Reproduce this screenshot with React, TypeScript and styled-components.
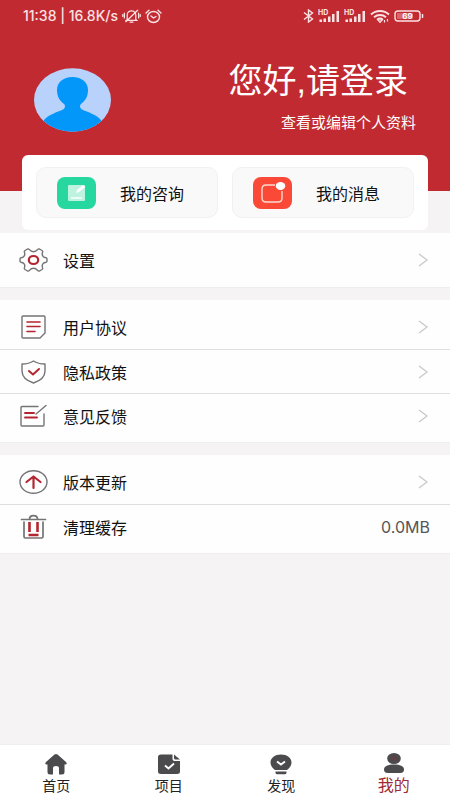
import React from "react";
import styled, { createGlobalStyle } from "styled-components";

const GlobalStyle = createGlobalStyle`
  * { box-sizing: border-box; }
  body {
    margin: 0;
    background: #f5f3f4;
    color: #111;
    font-family: "Liberation Sans", "Noto Sans CJK SC", sans-serif;
  }
  a { color: inherit; text-decoration: none; }
  button { font: inherit; color: inherit; border: 0; padding: 0; cursor: pointer; }
  svg { display: block; flex: none; }
`;

const Screen = styled.div`
  display: flex;
  flex-direction: column;
  min-height: 100vh;
`;

const Hero = styled.header`
  background: #c22a32;
  color: #fff;
  padding-bottom: 58px;
`;

const StatusBar = styled.div`
  display: flex;
  align-items: center;
  justify-content: space-between;
  height: 32px;
  padding: 0 26px 0 23px;
  color: #fbe3e3;
`;

const StatusGroup = styled.div`
  display: flex;
  align-items: center;
  gap: 4px;
  font: 500 14px/16px Inter, sans-serif;
`;

const Profile = styled.div`
  display: flex;
  align-items: flex-end;
  justify-content: space-between;
  padding: 29px 34px 0;
`;

const Greeting = styled.div`
  display: flex;
  flex-direction: column;
  align-items: flex-end;
  gap: 12px;
`;

const LoginLink = styled.a`
  font-size: 34px;
  line-height: 40px;
  padding-right: 8px;
`;

const EditLink = styled.a`
  font-size: 15px;
  line-height: 20px;
`;

const ShortcutCard = styled.section`
  display: grid;
  grid-template-columns: 1fr 1fr;
  gap: 14px;
  margin: -36px 22px 3px;
  padding: 12px 14px;
  background: #fff;
  border-radius: 6px;
`;

const Shortcut = styled.button`
  display: flex;
  align-items: center;
  gap: 24px;
  height: 51px;
  padding-left: 20px;
  background: #f9f9f9;
  border: 1px solid #f1f1f1;
  border-radius: 10px;
  font-size: 16px;
`;

const Groups = styled.main`
  display: flex;
  flex-direction: column;
  flex: 1;
  gap: 12px;
  padding-bottom: 12px;
`;

const Group = styled.nav`
  background: #fefefe;
  padding: 5px 0;
  border-bottom: 1px solid #efedee;
`;

const Row = styled.a`
  display: flex;
  align-items: center;
  height: 44px;
  padding: 0 20px 0 19px;
  font-size: 16px;

  & + & {
    border-top: 1px solid #dedede;
  }
`;

const RowLabel = styled.span`
  flex: 1;
  margin-left: 15px;
`;

const RowValue = styled.span`
  color: #555;
  font: 400 16px/20px Inter, sans-serif;
`;

const TabBar = styled.nav`
  display: grid;
  grid-template-columns: repeat(4, 1fr);
  height: 56px;
  background: #fff;
  border-top: 1px solid #f0eeee;
`;

const Tab = styled.a<{ $active?: boolean }>`
  display: flex;
  flex-direction: column;
  align-items: center;
  justify-content: flex-end;
  gap: 1px;
  padding-bottom: 4px;
  font-size: ${(p) => (p.$active ? 16 : 14)}px;
  line-height: 20px;
  color: ${(p) => (p.$active ? "#a02a35" : "#222")};
`;

const AvatarLink = styled.a`
  margin-bottom: 1px;
`;

const GREY = "#747476";
const RED = "#b3262f";
const DARK = "#4b4b4d";

const MutedBell = () => (
  <svg width="19" height="16" viewBox="0 0 20 16" fill="none" stroke="currentColor" strokeWidth="1.3" strokeLinecap="round">
    <path d="M5.500 11.500V7a4.500 4.500 0 0 1 9 0v4.500l1 1H4.500zM8.500 14.500h3M4 14 16.500 2M2.500 5v5M.8 6.500v2M17.500 5v5M19.200 6.500v2" />
  </svg>
);

const AlarmClock = () => (
  <svg width="17" height="15" viewBox="0 0 17 15" fill="none" stroke="currentColor" strokeWidth="1.4" strokeLinecap="round">
    <ellipse cx="8.500" cy="8" rx="6" ry="5.500" />
    <path d="M1 4 4 1.200M16 4l-3-2.800M6 7l2.500 2L11 7.500" />
  </svg>
);

const Bluetooth = () => (
  <svg width="11" height="14" viewBox="0 0 11 14" fill="none" stroke="currentColor" strokeWidth="1.4">
    <path d="m1 3.500 8.500 6.500-4 3V1l4 3L1 10.500" />
  </svg>
);

const HdSignal = () => (
  <svg width="22" height="14" viewBox="0 0 22 14" fill="currentColor">
    <text x="0" y="6" fontSize="7" fontWeight="700" fontFamily="Inter, sans-serif">HD</text>
    <path d="M1.500 10.500H4V13H1.500zM5.500 9.500H8V13H5.500zM10 7.500h2.500V13H10zM14 5h2.500v8H14zM18.500 2H21v11h-2.500z" />
  </svg>
);

const Wifi = () => (
  <svg width="20" height="14" viewBox="0 0 20 14" fill="none" stroke="currentColor" strokeWidth="1.900">
    <path d="M1 5.500c5-4.700 13-4.700 18 0M4 8.300c3.500-3 8.500-3 12 0M7 10.700c2-1.500 4-1.500 6 0" />
    <path d="m8 11 2 2.500 2-2.500zM14.500 11v2.500M17.500 10v2.500" strokeWidth="1.200" />
  </svg>
);

const Battery = () => (
  <svg width="30" height="12" viewBox="0 0 30 12" fill="none" stroke="currentColor">
    <rect x="1" y="1" width="25" height="10" rx="3" strokeWidth="1.400" />
    <rect x="3" y="3" width="16" height="6" rx="1" fill="#d9646a" stroke="none" />
    <path d="M28.500 4v4" strokeWidth="1.500" />
    <text x="13.500" y="9" textAnchor="middle" fontSize="8" fontWeight="700" fontFamily="Inter, sans-serif" fill="#fff" stroke="none">69</text>
  </svg>
);

const Avatar = () => (
  <svg width="77" height="64" viewBox="0 0 77 64" role="img" aria-label="头像">
    <defs>
      <clipPath id="avatar-shape"><ellipse cx="38.500" cy="32" rx="38.500" ry="31.700" /></clipPath>
    </defs>
    <g clipPath="url(#avatar-shape)">
      <path fill="#b8d2fb" d="M0 0h77v64H0z" />
      <path fill="#0497fa" d="M38.500 9C29 9 23 14.500 23 22c0 7 3 11 7 14 2 2 1 5-3 6.500-8 3-13 5-17 9.500V64h57V52c-4-4.500-9-6.500-17-9.500-4-1.500-5-4.500-3-6.500 4-3 7-7 7-14 0-7.500-6-13-15.500-13" />
    </g>
  </svg>
);

const ConsultIcon = () => (
  <svg width="39" height="32" viewBox="0 0 39 32">
    <rect width="39" height="32" rx="8" fill="#26d7a0" />
    <rect x="11" y="8" width="17" height="16" rx="1" fill="#bdf3df" />
    <path d="m19 16 1-3 6-5 2.500 2-6.500 5z" fill="#fff" />
    <path d="M14 21h11" stroke="#fff" strokeWidth="1.500" />
  </svg>
);

const MessageIcon = () => (
  <svg width="39" height="32" viewBox="0 0 39 32">
    <rect width="39" height="32" rx="8" fill="#fb4938" />
    <path d="M22 8h-9q-4 0-4 4v9q0 4 4 4h12q4 0 4-4v-7" fill="none" stroke="#ffd9cf" strokeWidth="1.400" />
    <ellipse cx="27.500" cy="9" rx="4.800" ry="4" fill="#fff" />
  </svg>
);

const RowIcon = ({ children }: { children: React.ReactNode }) => (
  <svg width="29" height="26" viewBox="0 0 29 26" fill="none" stroke={GREY} strokeWidth="1.4" strokeLinejoin="round" strokeLinecap="round">
    {children}
  </svg>
);

const SettingsIcon = () => (
  <RowIcon>
    <path d="M8.500 2Q9.500 1.500 10.500 2.700Q12 4.700 14.500 4.700Q17 4.700 18.500 2.700Q19.500 1.500 20.500 2L23 3.500Q24 4.200 23.500 5.500Q22.700 8 24.200 9.500Q25 10.500 27 10.800Q28 11 28 12V14Q28 15 27 15.200Q25 15.500 24.200 16.500Q22.700 18 23.500 20.500Q24 21.800 23 22.500L20.500 24Q19.500 24.500 18.500 23.300Q17 21.300 14.500 21.300Q12 21.300 10.500 23.300Q9.500 24.500 8.500 24L6 22.500Q5 21.800 5.500 20.500Q6.300 18 4.800 16.500Q4 15.500 2 15.200Q1 15 1 14V12Q1 11 2 10.800Q4 10.500 4.800 9.500Q6.300 8 5.500 5.500Q5 4.200 6 3.500Z" />
    <ellipse cx="14.500" cy="13" rx="4.700" ry="4" stroke={RED} strokeWidth="2.200" />
  </RowIcon>
);

const AgreementIcon = () => (
  <RowIcon>
    <path d="M4 2h21q1 0 1 1v16l-5 5H4q-1 0-1-1V3q0-1 1-1z" />
    <path d="M8 8h13M8 12.500h13M8 17.500h8" stroke={RED} strokeWidth="1.600" />
  </RowIcon>
);

const ShieldIcon = () => (
  <RowIcon>
    <path d="M14.500 2Q19 5 26 5v7c0 6-4 9.500-11.500 12C7 21.500 3 18 3 12V5q7 0 11.500-3z" />
    <path d="m10 12 4 3.500L20 10" stroke={RED} strokeWidth="2" />
  </RowIcon>
);

const FeedbackIcon = () => (
  <RowIcon>
    <path d="M19 3.500H3q-1 0-1 1V22q0 1 1 1h21q1 0 1-1V11M17 11l10-8.500" />
    <path d="M6 10h9M6 14.500h12" stroke={RED} strokeWidth="1.900" />
  </RowIcon>
);

const UpdateIcon = () => (
  <RowIcon>
    <ellipse cx="14.500" cy="13" rx="13.500" ry="11.300" />
    <path d="M14.500 19V7.500M7.500 13l7-5.500 7 5.500" stroke={RED} strokeWidth="2.200" />
  </RowIcon>
);

const TrashIcon = () => (
  <RowIcon>
    <path d="M2.500 5.500h24M10.500 5C10.500.5 18.500.5 18.500 5M5 8v14.500q0 1.500 1.500 1.500h16q1.500 0 1.500-1.500V8" strokeWidth="1.700" />
    <path d="M10.500 8v10M18.500 8v10M9.500 21h10" stroke={RED} strokeWidth="2.600" strokeLinecap="butt" />
  </RowIcon>
);

const Chevron = () => (
  <svg width="14" height="14" viewBox="0 0 14 14" fill="none" stroke="#c9c9c9" strokeWidth="1.300">
    <path d="m3 1 8 6-8 6" />
  </svg>
);

const HomeIcon = () => (
  <svg width="24" height="22" viewBox="0 0 24 22" fill={DARK}>
    <path d="M10.500 1.500q1.500-1 3 0L22 9q2 2.500-1 2.500h-.5V19q0 2.500-2.500 2.500h-3V15q0-2-3-2t-3 2v6.500H6Q3.500 21.500 3.500 19v-7.500H3Q0 11.500 2 9z" />
  </svg>
);

const ProjectIcon = () => (
  <svg width="24" height="22" viewBox="0 0 24 22">
    <path fill={DARK} d="M4 1.500h11.500V6q0 2 2 2H23v10.500q0 2.500-3 2.500H4q-3 0-3-2.500V4Q1 1.500 4 1.500zM17 1.500 23 6.500h-4.500Q17 6.500 17 5z" />
    <path d="m8 12.500 3.500 3 5.500-5" fill="none" stroke="#fff" strokeWidth="1.900" />
  </svg>
);

const DiscoverIcon = () => (
  <svg width="24" height="22" viewBox="0 0 24 22">
    <path fill={DARK} d="M12 1.500c6 0 10.500 3.500 10.500 8 0 3-2 5.500-4.500 7.500H6c-2.500-2-4.500-4.500-4.500-7.500 0-4.500 4.500-8 10.500-8zM6.500 18.500h11v1.200q0 1.500-2 1.500h-7q-2 0-2-1.500z" />
    <path d="m8 8.500 4 3 4-3" fill="none" stroke="#fff" strokeWidth="1.900" />
  </svg>
);

const MineIcon = () => (
  <svg width="24" height="22" viewBox="0 0 24 22" fill={DARK}>
    <ellipse cx="12" cy="5.500" rx="6.800" ry="5.500" />
    <ellipse cx="12" cy="5.500" rx="3.500" ry="2.500" fill="#5d4145" />
    <path d="M2 16.500C2 13 6 11.500 12 11.500s10 1.500 10 5q0 3.500-4 3.500H6q-4 0-4-3.500z" />
  </svg>
);

type Item = { label: string; Icon: React.ComponentType; value?: string };

const groups: Item[][] = [
  [{ label: "设置", Icon: SettingsIcon }],
  [
    { label: "用户协议", Icon: AgreementIcon },
    { label: "隐私政策", Icon: ShieldIcon },
    { label: "意见反馈", Icon: FeedbackIcon },
  ],
  [
    { label: "版本更新", Icon: UpdateIcon },
    { label: "清理缓存", Icon: TrashIcon, value: "0.0MB" },
  ],
];

const tabs = [
  { label: "首页", Icon: HomeIcon },
  { label: "项目", Icon: ProjectIcon },
  { label: "发现", Icon: DiscoverIcon },
  { label: "我的", Icon: MineIcon, active: true },
];

export default function App() {
  return (
    <Screen>
      <GlobalStyle />
      <Hero>
        <StatusBar>
          <StatusGroup>
            <span>11:38 | 16.8K/s</span>
            <MutedBell />
            <AlarmClock />
          </StatusGroup>
          <StatusGroup>
            <Bluetooth />
            <HdSignal />
            <HdSignal />
            <Wifi />
            <Battery />
          </StatusGroup>
        </StatusBar>
        <Profile>
          <AvatarLink href="#profile"><Avatar /></AvatarLink>
          <Greeting>
            <LoginLink href="#login">您好,请登录</LoginLink>
            <EditLink href="#profile">查看或编辑个人资料</EditLink>
          </Greeting>
        </Profile>
      </Hero>
      <ShortcutCard>
        <Shortcut type="button"><ConsultIcon />我的咨询</Shortcut>
        <Shortcut type="button"><MessageIcon />我的消息</Shortcut>
      </ShortcutCard>
      <Groups>
        {groups.map((items) => (
          <Group key={items[0].label}>
            {items.map(({ label, Icon, value }) => (
              <Row key={label} href="#">
                <Icon />
                <RowLabel>{label}</RowLabel>
                {value ? <RowValue>{value}</RowValue> : <Chevron />}
              </Row>
            ))}
          </Group>
        ))}
      </Groups>
      <TabBar>
        {tabs.map(({ label, Icon, active }) => (
          <Tab key={label} href="#" $active={active} aria-current={active ? "page" : undefined}>
            <Icon />
            {label}
          </Tab>
        ))}
      </TabBar>
    </Screen>
  );
}
